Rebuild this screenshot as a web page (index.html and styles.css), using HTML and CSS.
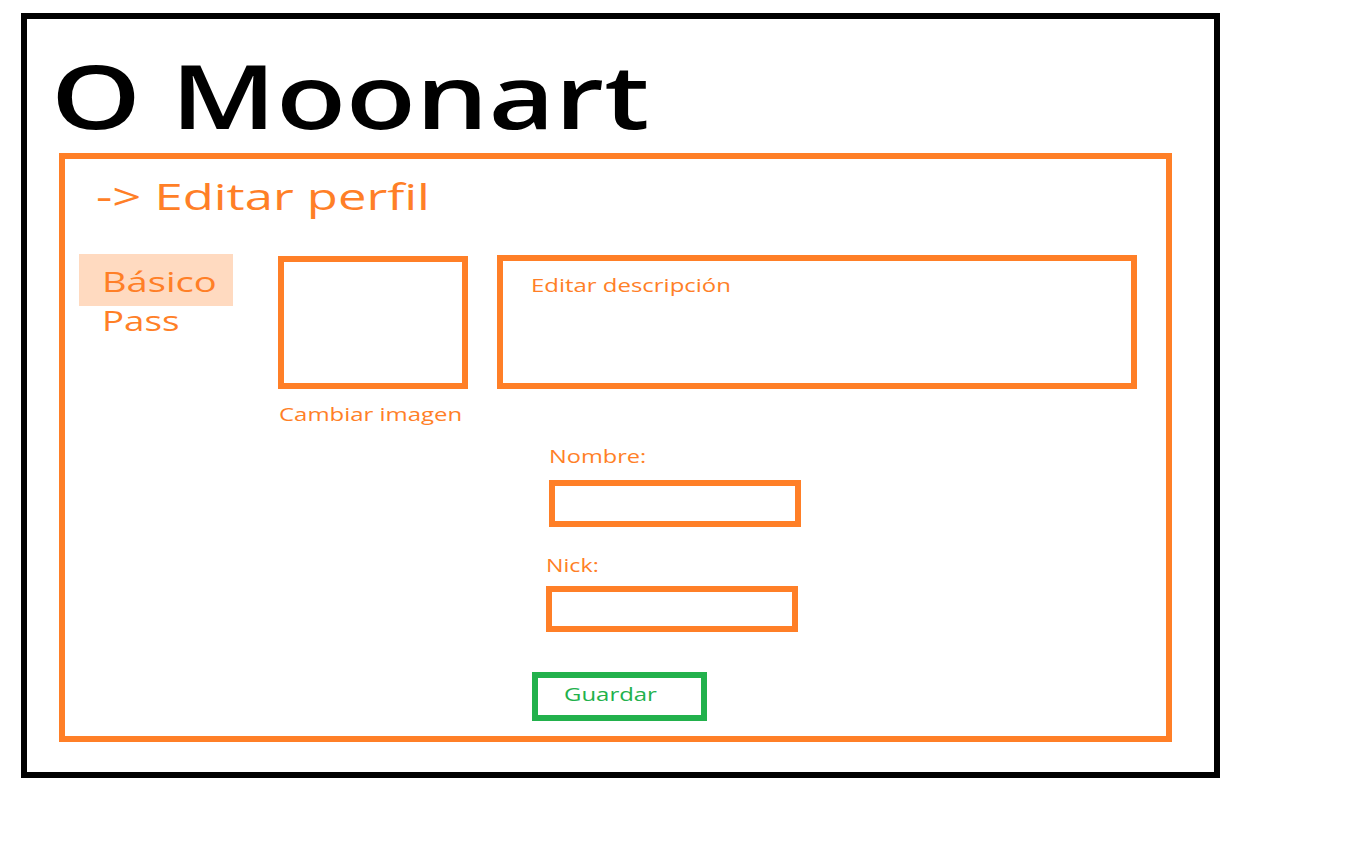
FILE: index.html
```html
<!DOCTYPE html>
<html lang="es">
<head>
<meta charset="utf-8">
<title>O Moonart - Editar perfil</title>
<link rel="stylesheet" href="styles.css">
</head>
<body>
<div class="frame">
  <h1 class="brand"><span class="brand-text">O Moonart</span></h1>
  <section class="panel">
    <h2 class="heading"><span class="heading-text">-&gt; Editar perfil</span></h2>
    <div class="top-row">
      <nav class="side-nav">
        <div class="nav-item active"><span class="nav-text">Básico</span></div>
        <div class="nav-item"><span class="nav-text nav-text-pass">Pass</span></div>
      </nav>
      <div class="avatar-col">
        <div class="avatar-box"></div>
        <div class="avatar-link"><span class="avatar-text">Cambiar imagen</span></div>
      </div>
      <div class="desc-box"><span class="desc-text">Editar descripción</span></div>
    </div>
    <div class="form">
      <div class="field field-nombre">
        <label class="field-label"><span class="label-text label-nombre">Nombre:</span></label>
        <div class="field-input input-nombre"></div>
      </div>
      <div class="field field-nick">
        <label class="field-label"><span class="label-text label-nick">Nick:</span></label>
        <div class="field-input input-nick"></div>
      </div>
      <div class="save-btn"><span class="save-text">Guardar</span></div>
    </div>
  </section>
</div>
</body>
</html>
```

FILE: styles.css
```css
* { box-sizing: border-box; }

html, body {
  margin: 0;
  padding: 0;
  background: #ffffff;
}

body {
  font-family: "Open Sans", "Noto Sans", sans-serif;
  color: #ff7f27;
}

/* the wireframe text is drawn horizontally stretched */
.brand-text,
.heading-text,
.nav-text,
.avatar-text,
.desc-text,
.label-text,
.save-text {
  display: inline-block;
  transform-origin: 0 50%;
  white-space: nowrap;
}

.frame {
  margin: 13px 0 0 21px;
  width: 1199px;
  height: 765px;
  border: 6px solid #000000;
}

.brand {
  margin: 32px 0 0 24px;
  height: 88px;
  font-size: 88px;
  line-height: 88px;
  font-weight: 600;
  color: #000000;
}

.brand-text { transform: scaleX(1.3); }

.panel {
  margin: 14px 0 0 32px;
  width: 1113px;
  height: 589px;
  border: 6px solid #ff7f27;
}

.heading {
  margin: 20px 0 0 31px;
  font-size: 36px;
  line-height: 36px;
  font-weight: normal;
  color: #ff7f27;
}

.heading-text { transform: scaleX(1.41); }

.top-row {
  display: flex;
  align-items: flex-start;
  margin-top: 39px;
  padding-left: 14px;
}

.side-nav {
  width: 154px;
  display: flex;
  flex-direction: column;
}

.nav-item {
  font-size: 28px;
  line-height: 28px;
  padding: 0 0 0 23px;
}

.nav-item.active {
  background: #ffdac0;
  padding: 13px 0 11px 23px;
}

.nav-text { transform: scaleX(1.36); }
.nav-text-pass { transform: scaleX(1.31); }

.avatar-col {
  margin: 2px 0 0 45px;
  width: 190px;
}

.avatar-box {
  width: 190px;
  height: 133px;
  border: 6px solid #ff7f27;
}

.avatar-link {
  margin-top: 16px;
  padding-left: 1px;
  font-size: 19px;
  line-height: 19px;
}

.avatar-text { transform: scaleX(1.26); }

.desc-box {
  margin: 1px 0 0 29px;
  width: 640px;
  height: 134px;
  border: 6px solid #ff7f27;
  padding: 15px 0 0 28px;
  font-size: 18px;
  line-height: 18px;
}

.desc-text { transform: scaleX(1.33); }

.form {
  display: flex;
  flex-direction: column;
  align-items: flex-start;
  margin-top: 23px;
}

.field {
  display: flex;
  flex-direction: column;
  align-items: flex-start;
}

.field-nombre { margin-left: 482px; }

.field-nick {
  margin: 29px 0 0 479px;
}

.field-label {
  font-size: 18px;
  line-height: 18px;
  padding-left: 2px;
}

.label-nombre { transform: scaleX(1.31); }
.label-nick { transform: scaleX(1.29); }

.field-input {
  width: 252px;
  border: 6px solid #ff7f27;
  margin-left: 2px;
}

.input-nombre {
  margin-top: 15px;
  height: 47px;
}

.input-nick {
  margin-top: 12px;
  height: 46px;
}

.save-btn {
  margin: 40px 0 0 467px;
  width: 175px;
  height: 49px;
  border: 6px solid #22b14c;
  color: #22b14c;
  font-size: 19px;
  line-height: 19px;
  padding: 7px 0 0 26px;
}

.save-text { transform: scaleX(1.26); }
```
